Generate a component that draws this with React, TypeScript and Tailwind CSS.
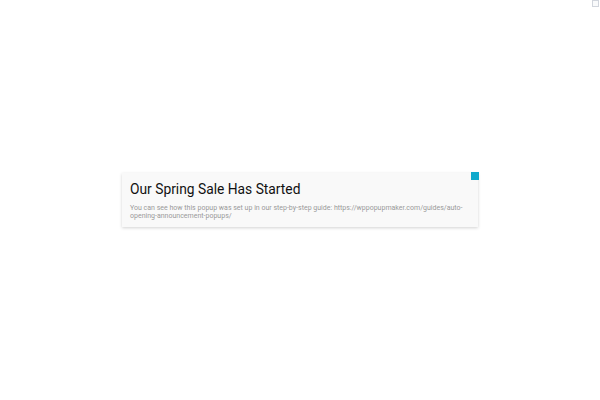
export default function App() {
  return (
    <div className="relative flex h-[400px] w-[600px] items-center justify-center bg-white" style={{ fontFamily: 'Roboto, "Noto Sans", sans-serif' }}>
      {/* broken image placeholder in the corner */}
      <div className="absolute right-[1px] top-0 h-[7px] w-[7px] border border-gray-300 bg-gray-50" />

      <div className="relative w-[356px] bg-[#f9f9f9] px-[8px] pb-[7px] pt-[5px] shadow-[0_1px_3px_rgba(0,0,0,0.18)]">
        <h1 className="text-[13.8px] leading-[22px] font-normal text-[#111]">Our Spring Sale Has Started</h1>
        <p className="mt-[4px] pr-[2px] text-[7px] leading-[8px] text-[#9a9a9a]">
          You can see how this popup was set up in our step-by-step guide: https://wppopupmaker.com/guides/auto-opening-announcement-popups/
        </p>
        <button className="absolute -right-[1px] -top-[1px] h-[8px] w-[8px] bg-[#0fa9cc]" aria-label="Close" />
      </div>
    </div>
  );
}
